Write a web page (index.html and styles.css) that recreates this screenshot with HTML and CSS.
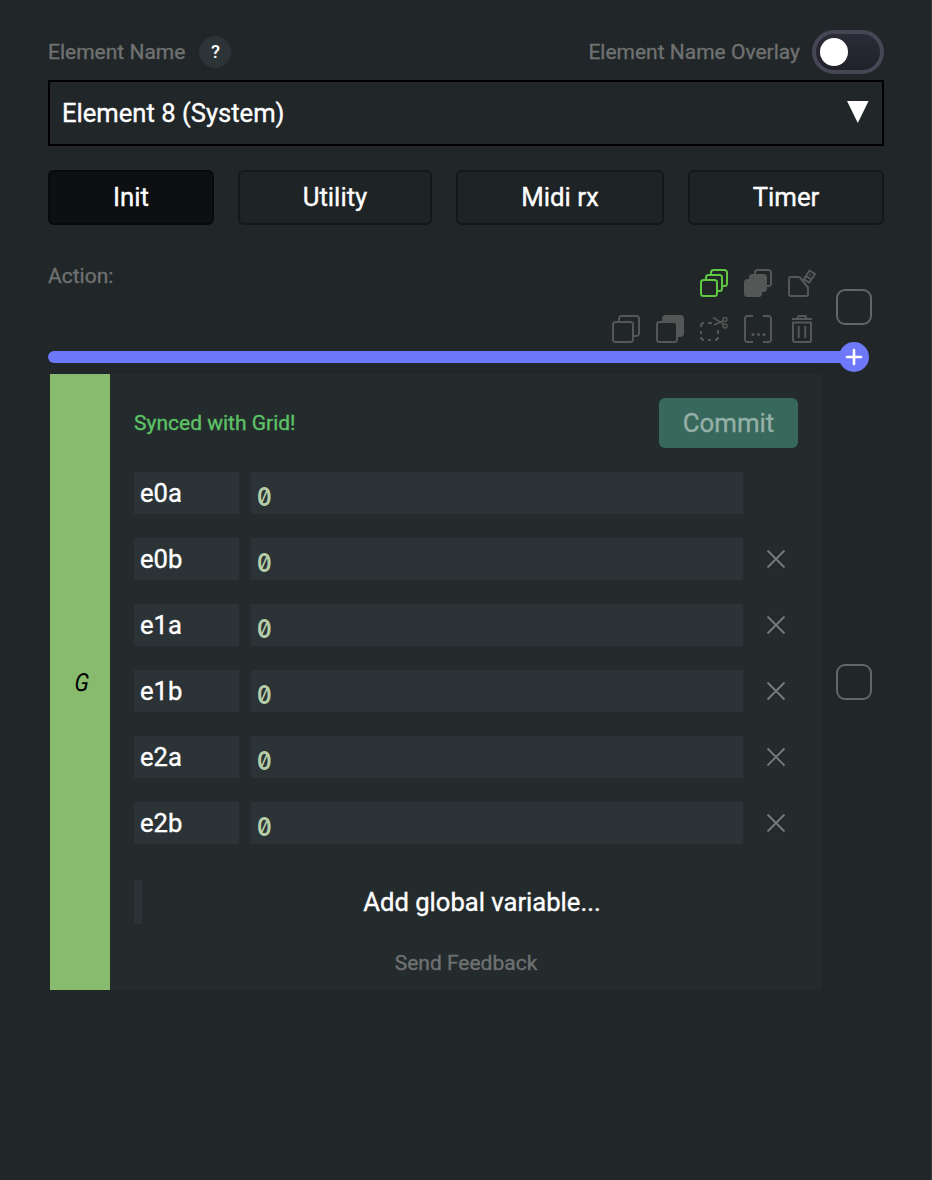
FILE: index.html
```html
<!DOCTYPE html>
<html lang="en">
<head>
<meta charset="utf-8">
<title>Element configuration</title>
<link rel="stylesheet" href="styles.css">
</head>
<body>
<main class="page">
  <header class="head">
    <span class="label">Element Name</span><span class="help">?</span>
    <span class="label overlay-label">Element Name Overlay</span>
    <span class="toggle"><span class="knob"></span></span>
  </header>
  <div class="select"><span>Element 8 (System)</span>
    <svg class="caret" width="22" height="22" viewBox="0 0 22 22"><path d="M0 0H21.6L10.8 22Z" fill="#fff"/></svg>
  </div>
  <nav class="tabs">
    <button class="tab active">Init</button><button class="tab">Utility</button><button class="tab">Midi rx</button><button class="tab">Timer</button>
  </nav>
  <section class="actions">
    <span class="label action-label">Action:</span>
    <div class="tools">
      <div class="tool-row">
        <svg class="icon green" viewBox="0 0 28 28"><rect x="1" y="11" width="16" height="16" rx="2.500"/><path d="M6 11V8.500a2.500 2.500 0 0 1 2.500-2.500h11a2.500 2.500 0 0 1 2.500 2.500v11a2.500 2.500 0 0 1-2.500 2.500h-2.500M11 6V3.500a2.500 2.500 0 0 1 2.500-2.500h11a2.500 2.500 0 0 1 2.500 2.500v11a2.500 2.500 0 0 1-2.500 2.500h-2.500"/></svg>
        <svg class="icon" viewBox="0 0 28 28"><path d="M11 6V3.500a2.500 2.500 0 0 1 2.500-2.500h11a2.500 2.500 0 0 1 2.500 2.500v11a2.500 2.500 0 0 1-2.500 2.500h-2.500"/><rect class="solid" x="1" y="11" width="16" height="16" rx="2.500"/><rect class="solid" x="6" y="6" width="16" height="16" rx="2.500"/></svg>
        <svg class="icon" viewBox="0 0 28 28"><path d="M11.500 8H3a2 2 0 0 0-2 2v15a2 2 0 0 0 2 2h15a2 2 0 0 0 2-2v-6.500L11.500 8"/><path d="M21.500 1.500l5.500 3.500-5.800 8.700-5.500-3.500zM18 6.800l5.500 3.500"/><path d="M21.500 5.300l1.300.8"/></svg>
      </div>
      <div class="tool-row">
        <svg class="icon" viewBox="0 0 28 28"><rect x="1" y="7" width="20" height="20" rx="2.500"/><path d="M7 7V3.500a2.500 2.500 0 0 1 2.500-2.500h15a2.500 2.500 0 0 1 2.500 2.500v15a2.500 2.500 0 0 1-2.500 2.500h-3.500"/></svg>
        <svg class="icon" viewBox="0 0 28 28"><path class="solid" d="M7 7V3.500a2.500 2.500 0 0 1 2.500-2.500h15a2.500 2.500 0 0 1 2.500 2.500v15a2.500 2.500 0 0 1-2.500 2.500h-3.500V9.500a2.500 2.500 0 0 0-2.500-2.500z"/><rect x="1" y="7" width="20" height="20" rx="2.500"/></svg>
        <svg class="icon" viewBox="0 0 28 28"><path d="M1 12v-1a3 3 0 0 1 3-3M8 8h4M1 16v3M1 22a3 3 0 0 0 3 3M8 25h3M15 25a3 3 0 0 0 3-3M18 15v4"/><g class="thin"><path d="M13 2.500l11 7M14 10l10-4.500"/><circle cx="25" cy="4.500" r="2"/><circle cx="25" cy="11" r="2"/></g></svg>
        <svg class="icon" viewBox="0 0 28 28"><path d="M9 1H3.500a2.500 2.500 0 0 0-2.500 2.500v21a2.500 2.500 0 0 0 2.500 2.500H9M19 1h5.500a2.500 2.500 0 0 1 2.500 2.500v21a2.500 2.500 0 0 1-2.500 2.500H19"/><g class="dots"><circle cx="9" cy="19.500" r="1.600"/><circle cx="14.500" cy="19.500" r="1.600"/><circle cx="20" cy="19.500" r="1.600"/></g></svg>
        <svg class="icon" viewBox="0 0 28 28"><path d="M4 4h20M10 3V2a1 1 0 0 1 1-1h6a1 1 0 0 1 1 1v1M5 7.500h18V25a2 2 0 0 1-2 2H7a2 2 0 0 1-2-2zM10.700 11v12M17.300 11v12"/></svg>
      </div>
    </div>
    <span class="check"></span>
  </section>
  <div class="divider"><svg class="plus" width="30" height="30" viewBox="0 0 30 30"><circle cx="15" cy="15" r="15" fill="#6d79f8"/><path d="M15 8v14M8 15h14" stroke="#fff" stroke-width="2.600" stroke-linecap="round"/></svg></div>
  <section class="block">
    <article class="panel">
      <div class="grip"><span class="g">G</span></div>
      <div class="body">
        <div class="status"><span>Synced with Grid!</span><button class="commit">Commit</button></div>
        <div class="vars">
          <div class="var"><span class="key">e0a</span><span class="value"><i>0</i></span></div>
          <div class="var"><span class="key">e0b</span><span class="value"><i>0</i></span><svg class="x" viewBox="0 0 20 20"><path d="M1.500 1.500l17 17M18.500 1.500l-17 17"/></svg></div>
          <div class="var"><span class="key">e1a</span><span class="value"><i>0</i></span><svg class="x" viewBox="0 0 20 20"><path d="M1.500 1.500l17 17M18.500 1.500l-17 17"/></svg></div>
          <div class="var"><span class="key">e1b</span><span class="value"><i>0</i></span><svg class="x" viewBox="0 0 20 20"><path d="M1.500 1.500l17 17M18.500 1.500l-17 17"/></svg></div>
          <div class="var"><span class="key">e2a</span><span class="value"><i>0</i></span><svg class="x" viewBox="0 0 20 20"><path d="M1.500 1.500l17 17M18.500 1.500l-17 17"/></svg></div>
          <div class="var"><span class="key">e2b</span><span class="value"><i>0</i></span><svg class="x" viewBox="0 0 20 20"><path d="M1.500 1.500l17 17M18.500 1.500l-17 17"/></svg></div>
        </div>
        <div class="add"><span class="add-text">Add global variable...</span></div>
        <div class="feedback">Send Feedback</div>
      </div>
    </article>
    <span class="check"></span>
  </section>
</main>
</body>
</html>
```
FILE: styles.css
```css
* { box-sizing: border-box; }
body { margin: 0; background: #212628; color: #fff; font-family: Roboto, sans-serif; font-size: 25.6px; -webkit-text-stroke: .35px; }
button { font: inherit; color: inherit; margin: 0; padding: 0; }
.page { height: 1180px; padding: 30px 47px 0 48px; border-right: 1px solid #343a3a; overflow: hidden; }
.head { display: flex; align-items: center; height: 44px; }
.label { font-size: 21px; line-height: 24px; color: #6f7171; white-space: nowrap; }
.help { width: 32px; height: 32px; margin-left: 14px; border-radius: 50%; background: #2c3437; font-size: 18.5px; font-weight: 500; line-height: 32px; text-align: center; -webkit-text-stroke: 0; }
.overlay-label { margin-left: auto; }
.toggle { width: 72px; height: 44px; margin-left: 12px; padding: 4px; border: 4px solid #464654; border-radius: 22px; background: linear-gradient(#2b2b37, #21212a); }
.knob { display: block; width: 28px; height: 28px; border-radius: 50%; background: #fff; }
.select { display: flex; justify-content: space-between; height: 66px; margin-top: 6px; padding: 0 13px 0 12px; border: 2px solid #000; line-height: 62px; }
.caret { margin-top: 19px; }
.tabs { display: grid; grid-template-columns: 166px 194px 208px 196px; gap: 24px; margin-top: 24px; }
.tab { height: 55px; padding-bottom: 2px; border: 2px solid #141819; border-radius: 6px; background: #1e2325; font-size: 25.8px; }
.tab.active { border-color: #08090a; background: #0e0f11; }
.actions { display: flex; height: 126px; }
.action-label { margin-top: 39px; }
.tools { display: flex; flex-direction: column; gap: 18px; align-items: flex-end; margin: 44px 0 0 auto; }
.tool-row { display: flex; gap: 16px; }
.icon { display: block; width: 28px; height: 28px; fill: none; stroke: #555756; stroke-width: 2; stroke-linejoin: round; }
.icon.green { stroke: #5fc741; }
.solid, .dots { fill: #555756; }
.dots { stroke: none; }
.thin { stroke-width: 1.500; }
.check { width: 36px; height: 36px; border: 2px solid #626666; border-radius: 9px; flex: none; }
.actions .check { margin: 64px 12px 0 20px; }
.divider { position: relative; width: 806px; height: 12px; border-radius: 6px; background: #6d79f8; }
.plus { position: absolute; right: -15px; top: -9px; }
.block { display: flex; align-items: center; gap: 14px; margin: 11px 0 0 2px; }
.panel { display: flex; width: 772px; height: 616px; background: #242b2d; }
.grip { display: flex; align-items: center; justify-content: center; width: 60px; background: #88bb6d; color: #000; }
.g { font-size: 25px; font-style: italic; -webkit-text-stroke: 0; transform: translateX(1.5px) skewX(-4deg) scaleX(.87); }
.body { flex: 1; padding: 24px; }
.status { display: flex; align-items: center; justify-content: space-between; height: 50px; color: #5dc265; font-size: 21px; }
.commit { width: 139px; height: 50px; border: 0; border-radius: 6px; background: #38675b; color: #94b0a7; font-size: 25.8px; }
.vars { display: grid; gap: 24px; margin-top: 24px; }
.var { display: flex; align-items: center; height: 42px; }
.key { width: 105px; padding-left: 6px; background: #2c3336; line-height: 42px; }
.value { width: 492px; height: 42px; margin-left: 12px; padding-left: 6px; background: #2c3336; color: #b5cea8; font-family: Inter, sans-serif; font-size: 25.5px; font-feature-settings: "zero"; line-height: 49px; }
.value i { display: inline-block; font-style: normal; font-weight: 600; -webkit-text-stroke: 0; transform: scaleX(.87); transform-origin: left; }
.x { width: 20px; height: 20px; margin-left: 23px; fill: none; stroke: #777b7a; stroke-width: 1.800; }
.add { height: 44px; margin-top: 36px; border-left: 8px solid #2c3336; line-height: 44px; text-align: center; padding-left: 24px; }
.feedback { margin-top: 27px; color: #6f7171; font-size: 21px; line-height: 25px; text-align: center; }
```
